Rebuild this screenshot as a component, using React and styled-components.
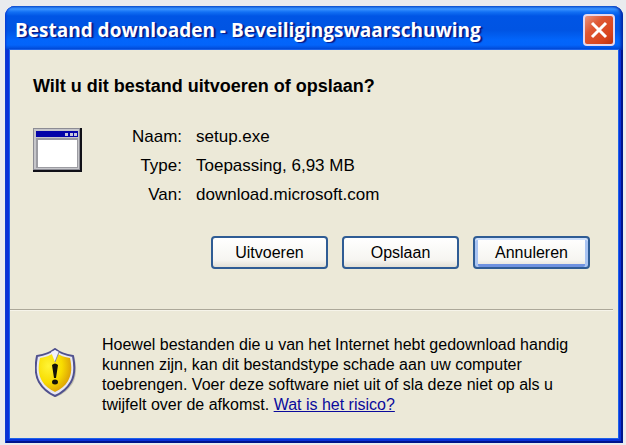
import React from 'react';
import styled, { createGlobalStyle } from 'styled-components';

const details = [
  { label: 'Naam:', value: 'setup.exe' },
  { label: 'Type:', value: 'Toepassing, 6,93 MB' },
  { label: 'Van:', value: 'download.microsoft.com' },
];

const ProgramIcon = () => (
  <svg width="49" height="44" viewBox="0 0 49 44" aria-hidden="true">
    <rect width="49" height="44" fill="#101018" />
    <rect width="47" height="42" fill="#8c8c94" />
    <rect x="1" y="1" width="45" height="40" fill="#c6c6ca" />
    <rect x="3" y="3" width="42" height="6" fill="#0404a8" />
    <path d="M32 5h3v3h-3zM37 5h3v3h-3zM41 5h3v3h-3z" fill="#c8c8dc" />
    <rect x="3" y="10" width="42" height="30" fill="#9c9ca2" />
    <rect x="5" y="12" width="39" height="27" fill="#fff" />
  </svg>
);

const ShieldIcon = () => (
  <svg width="42" height="50" viewBox="0 0 42 50" aria-hidden="true">
    <defs>
      <radialGradient id="shieldFill" cx="0.3" cy="0.35" r="0.75">
        <stop offset="0" stopColor="#fff436" />
        <stop offset="0.55" stopColor="#f8dc00" />
        <stop offset="1" stopColor="#d99a08" />
      </radialGradient>
    </defs>
    <path
      d="M21 2C16 6 9 8 3 8C1 19 0 28 5 36C9 42 14 46 21 49C29 46 34 41 38 35C42 27 42 18 39 8C33 8 26 6 21 2Z"
      fill="#aaa996"
      opacity="0.6"
    />
    <path
      d="M20 1C15 5 8 7 2 8C0 18 0 27 4 34C8 41 13 45 20 48C27 45 32 41 36 34C40 27 40 18 38 8C32 7 25 5 20 1Z"
      fill="#e8e8f4"
      stroke="#50518e"
      strokeWidth="2"
    />
    <path
      d="M20 4C15 8 10 9 5 10C3 19 3 26 7 33C10 38 14 41 20 44C26 41 30 38 33 33C37 26 37 19 35 10C30 9 25 8 20 4Z"
      fill="url(#shieldFill)"
    />
    <path d="M16 4L20 2L24 4L20 14Z" fill="#f1f1fb" />
    <path d="M24 4L20 14" stroke="#8789a4" />
    <path d="M17 17Q20 14 23 17L21 30H19Z" fill="#141408" />
    <ellipse cx="20" cy="34" rx="3" ry="2.5" fill="#141408" />
  </svg>
);

const App = () => (
  <>
    <GlobalStyle />
    <Dialog role="dialog" aria-labelledby="dialog-title">
      <TitleBar>
        <Title id="dialog-title">Bestand downloaden - Beveiligingswaarschuwing</Title>
        <CloseButton type="button" aria-label="Sluiten">
          <svg width="20" height="20" viewBox="0 0 20 20" aria-hidden="true">
            <path d="M3 3L17 17M17 3L3 17" stroke="#fff" strokeWidth="3" />
          </svg>
        </CloseButton>
      </TitleBar>

      <Body>
        <Main>
          <Question>Wilt u dit bestand uitvoeren of opslaan?</Question>
          <FileInfo>
            <ProgramIcon />
            <Details>
              {details.map((item) => (
                <React.Fragment key={item.label}>
                  <Label>{item.label}</Label>
                  <Value>{item.value}</Value>
                </React.Fragment>
              ))}
            </Details>
          </FileInfo>
          <Actions>
            <Button type="button">Uitvoeren</Button>
            <Button type="button">Opslaan</Button>
            <Button type="button" $default>Annuleren</Button>
          </Actions>
        </Main>

        <Divider />

        <Warning>
          <ShieldIcon />
          <WarningText>
            Hoewel bestanden die u van het Internet hebt gedownload handig
            kunnen zijn, kan dit bestandstype schade aan uw computer
            toebrengen. Voer deze software niet uit of sla deze niet op als u
            twijfelt over de afkomst. <RiskLink href="#risico">Wat is het risico?</RiskLink>
          </WarningText>
        </Warning>
      </Body>
    </Dialog>
  </>
);

const GlobalStyle = createGlobalStyle`
  * {
    box-sizing: border-box;
  }

  body {
    margin: 0;
    background: #e9ebee;
    color: #000;
    font-family: 'Liberation Sans', Arial, sans-serif;
    font-size: 16px;
  }
`;

const Dialog = styled.div`
  margin: 6px 3px 2px 5px;
  padding: 0 5px 5px;
  border-radius: 10px 10px 0 0;
  background: #0831d9;
  box-shadow: inset 1px 0 #0a3bd0, inset -2px -2px #00138c;
`;

const TitleBar = styled.div`
  display: flex;
  align-items: center;
  justify-content: space-between;
  height: 44px;
  margin: 0 -5px;
  padding: 4px 8px 0 10px;
  border-radius: 10px 10px 0 0;
  background: linear-gradient(
    to bottom,
    #0d5ad8 0,
    #3a93ff 3px,
    #1270f4 6px,
    #0055e5 10px,
    #0054e3 24px,
    #0265fb 34px,
    #0364fa 39px,
    #0144cf 44px
  );
  box-shadow: inset -3px 0 3px -1px #0024a0, inset 2px 0 2px -1px #0a3bd0;
`;

const Title = styled.h1`
  margin: 0;
  color: #fff;
  font-family: 'Open Sans', 'Noto Sans', sans-serif;
  font-size: 19px;
  font-weight: 700;
  line-height: 24px;
  white-space: nowrap;
  text-shadow: 2px 1px 1px #0a1883;
`;

const CloseButton = styled.button`
  display: flex;
  flex: none;
  align-items: center;
  justify-content: center;
  width: 32px;
  height: 32px;
  padding: 0;
  border: 2px solid #e4d8ee;
  border-radius: 4px;
  background: linear-gradient(135deg, #e9937c 0%, #de5733 35%, #d9441c 75%, #bd3210 100%);
`;

const Body = styled.div`
  background: #ece9d8;
  box-shadow: 0 0 0 1px #1d62e8;
`;

const Main = styled.div`
  padding: 24px 28px 40px 23px;
`;

const Question = styled.h2`
  margin: 0 0 30px;
  font-size: 18px;
  font-weight: 700;
  line-height: 24px;
`;

const FileInfo = styled.div`
  display: flex;
  align-items: flex-start;
  gap: 50px;
`;

const Details = styled.dl`
  display: grid;
  grid-template-columns: 50px 1fr;
  column-gap: 14px;
  margin: -6px 0 0;
  font-size: 17px;
  line-height: 29px;
`;

const Label = styled.dt`
  text-align: right;
`;

const Value = styled.dd`
  margin: 0;
`;

const Actions = styled.div`
  display: flex;
  justify-content: flex-end;
  gap: 14px;
  margin-top: 27px;
`;

const Button = styled.button`
  width: 117px;
  height: 33px;
  padding: 0;
  border: 2px solid #2f5c94;
  border-radius: 4px;
  background: linear-gradient(to bottom, #fff, #f6f5f1 75%, #e2dfd5);
  color: #000;
  font: inherit;
  box-shadow: ${(props) => (props.$default
    ? 'inset 0 2px #cfe0fb, inset 3px 0 #a9c4f2, inset -3px 0 #a9c4f2, inset 0 -3px #6f92e0'
    : 'none')};
`;

const Divider = styled.hr`
  height: 2px;
  margin: 0 5px 0 0;
  border: 0;
  border-top: 1px solid #aca899;
  border-bottom: 1px solid #f6f4ea;
`;

const Warning = styled.div`
  display: flex;
  align-items: flex-start;
  gap: 25px;
  padding: 24px 29px 23px 25px;

  svg {
    flex: none;
    margin-top: 13px;
  }
`;

const WarningText = styled.p`
  margin: 0;
  line-height: 20px;
`;

const RiskLink = styled.a`
  color: #0a0a9c;
  text-decoration: underline;
`;

export default App;
